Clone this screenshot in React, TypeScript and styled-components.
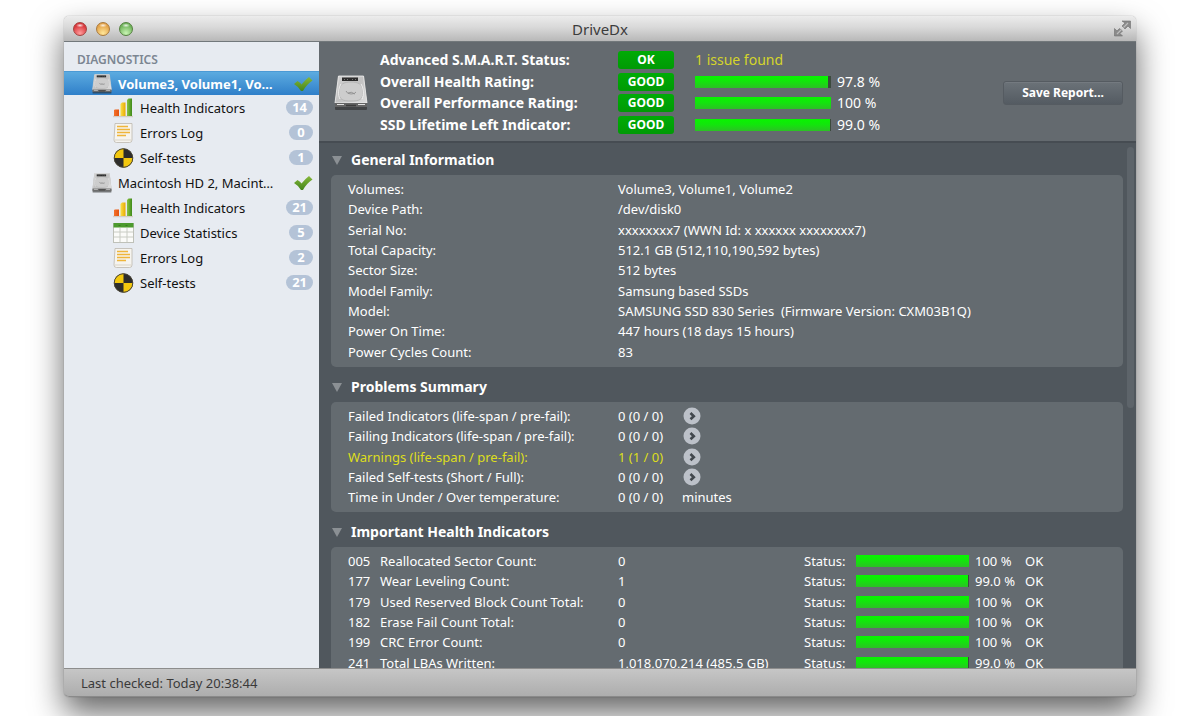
import React from 'react';
import styled, { createGlobalStyle, css } from 'styled-components';

const GlobalStyle = createGlobalStyle`
  * { box-sizing: border-box; }
  body {
    margin: 0;
    background: #fff;
    font-family: "Noto Sans", "Open Sans", sans-serif;
    font-size: 13px;
  }
  button { font: inherit; color: inherit; }
  table { border-collapse: collapse; border-spacing: 0; }
  th { text-align: left; font-weight: inherit; }
  th, td { padding: 0; }
`;

const Desktop = styled.div`
  display: flex;
  height: 100vh;
  padding: 16px 64px 19px;
  overflow: hidden;
`;

const Window = styled.div`
  flex: 1;
  min-width: 0;
  display: flex;
  flex-direction: column;
  border-radius: 5px;
  box-shadow: 0 0 1px rgba(0, 0, 0, 0.5), 0 16px 32px rgba(0, 0, 0, 0.6);
`;

const TitleBar = styled.header`
  display: grid;
  grid-template-columns: 1fr auto 1fr;
  align-items: center;
  height: 26px;
  padding: 0 5px;
  border-radius: 5px 5px 0 0;
  border-bottom: 1px solid #72787b;
  background: linear-gradient(#ececec, #d9d9d9 45%, #b8b8b8);
`;

const Lights = styled.div`
  display: flex;
  gap: 9px;
  padding-left: 4px;
`;

const Light = styled.button<{ $edge: string; $mid: string; $glow: string }>`
  width: 14px;
  height: 14px;
  padding: 0;
  border: 1px solid ${(p) => p.$edge};
  border-radius: 50%;
  background:
    radial-gradient(ellipse 4px 2px at 50% 20%, rgba(255, 255, 255, 0.85), transparent),
    radial-gradient(circle at 50% 85%, ${(p) => p.$glow}, ${(p) => p.$mid} 70%);
`;

const Title = styled.h1`
  margin: 0;
  font-size: 15px;
  line-height: 20px;
  font-weight: 400;
  color: #3c3c3c;
`;

const FullScreenButton = styled.button`
  justify-self: end;
  display: flex;
  padding: 0;
  border: 0;
  background: none;
`;

const Body = styled.div`
  flex: 1;
  min-height: 0;
  display: flex;
`;

const Sidebar = styled.nav`
  width: 255px;
  flex: none;
  padding-top: 8px;
  background: #e7ebf1;
`;

const SidebarHeading = styled.h2`
  margin: 0;
  padding: 0 13px;
  height: 21px;
  font-size: 12px;
  line-height: 20px;
  font-weight: 600;
  color: #7c8692;
`;

const Tree = styled.ul`
  margin: 0;
  padding: 0;
  list-style: none;
`;

const TreeItem = styled.button<{ $child?: boolean; $selected?: boolean }>`
  display: flex;
  align-items: center;
  gap: 6px;
  width: 100%;
  height: 25px;
  padding: 0 6px 0 ${(p) => (p.$child ? 49 : 28)}px;
  border: 0;
  background: none;
  font-size: 13px;
  line-height: 20px;
  color: #111;
  text-align: left;
  ${(p) =>
    p.$selected &&
    css`
      height: 24px;
      background: linear-gradient(#5cabe0, #2f7fc9);
      border-top: 1px solid #4b9ad5;
      color: #fff;
      font-weight: 700;
    `}
`;

const TreeLabel = styled.span`
  flex: 1;
  white-space: nowrap;
`;

const Count = styled.span`
  min-width: 24px;
  height: 15px;
  padding: 0 6px;
  border-radius: 8px;
  background: #b4c3d7;
  color: #fff;
  font-size: 13px;
  line-height: 15px;
  font-weight: 700;
  text-align: center;
`;

const Main = styled.main`
  flex: 1;
  min-width: 0;
  display: flex;
  flex-direction: column;
  color: #fff;
`;

const Overview = styled.section`
  display: flex;
  align-items: center;
  gap: 12px;
  height: 101px;
  padding: 2px 13px 0 15px;
  background: #646a6f;
  border-bottom: 2px solid #464c52;
`;

const RatingTable = styled.table`
  font-size: 14px;
  line-height: 20px;
  tr { height: 21px; }
  tr:nth-child(2n) { height: 22px; }
  th { font-weight: 700; width: 238px; }
  td { white-space: nowrap; }
`;

const Badge = styled.span`
  display: block;
  width: 56px;
  margin-right: 21px;
  border-radius: 3px;
  background: linear-gradient(#00ab06, #009a05);
  font-size: 12px;
  line-height: 18px;
  font-weight: 700;
  text-align: center;
`;

const Issue = styled.span`
  color: #d5d52b;
`;

const Gauge = styled.progress<{ $width: number }>`
  display: block;
  appearance: none;
  width: ${(p) => p.$width}px;
  height: 12px;
  margin-right: 6px;
  border: 0;
  background: #3b4a3d;
  &::-webkit-progress-bar { background: #3b4a3d; }
  &::-webkit-progress-value { background: linear-gradient(#08f400, #12e60c 45%, #2cc125); }
`;

const SaveButton = styled.button`
  width: 120px;
  height: 24px;
  margin-left: auto;
  padding: 0;
  border: 1px solid #555b61;
  border-radius: 3px;
  background: linear-gradient(#6b7278, #545b62);
  box-shadow: inset 0 1px 0 #747a80;
  font-size: 12px;
  line-height: 20px;
  font-weight: 700;
`;

const ScrollArea = styled.div`
  flex: 1;
  min-height: 0;
  display: flex;
  background: #50575d;
`;

const ScrollContent = styled.div`
  flex: 1;
  min-width: 0;
  padding-left: 12px;
  overflow-y: auto;
  scrollbar-width: none;
`;

const ScrollTrack = styled.div`
  width: 13px;
  padding: 4px 2px 0 4px;
`;

const ScrollThumb = styled.div`
  height: 50%;
  border-radius: 4px;
  background: #5d646a;
`;

const SectionToggle = styled.button`
  display: flex;
  align-items: center;
  gap: 9px;
  height: 20px;
  margin: 7px 0 5px;
  padding: 0 1px;
  border: 0;
  background: none;
  font-size: 14px;
  line-height: 20px;
  font-weight: 700;
`;

const Card = styled.div`
  margin-bottom: 10px;
  padding: 4px 17px 5px;
  border-radius: 5px;
  background: #646b70;
`;

const DataTable = styled.table`
  width: 100%;
  table-layout: fixed;
  font-size: 13px;
  line-height: 20px;
  white-space: pre;
  tr { height: 20px; }
  tr:nth-child(3n) { height: 21px; }
`;

const Row = styled.tr<{ $warning?: boolean }>`
  color: ${(p) => (p.$warning ? '#dede1c' : '#fff')};
`;

const GoButton = styled.button`
  display: flex;
  padding: 0 1px;
  border: 0;
  background: none;
`;

const StatusBar = styled.footer`
  height: 29px;
  padding: 0 17px;
  border-top: 1px solid #8d8d8d;
  border-bottom: 1px solid #8a8a8a;
  border-radius: 0 0 5px 5px;
  background: linear-gradient(#c6c6c6, #adadad);
  color: #3a3a3a;
  font-size: 13px;
  line-height: 28px;
`;

function DriveIcon({ width, height }: { width: number; height: number }) {
  return (
    <svg width={width} height={height} viewBox="0 0 34 36" preserveAspectRatio="none" aria-hidden="true">
      <defs>
        <linearGradient id="driveTop" x1="0" y1="0" x2="1" y2="1">
          <stop offset="0" stopColor="#d2d2d2" />
          <stop offset="0.5" stopColor="#c2c2c2" />
          <stop offset="1" stopColor="#dedede" />
        </linearGradient>
      </defs>
      <path d="M1 31h32v3q0 1-1 1H2q-1 0-1-1z" fill="#2b2b2b" opacity="0.6" />
      <path d="M4 1h26l3 26v5H1v-5z" fill="#8d8d8d" />
      <path d="M4.500 1h25l3.500 27H1z" fill="url(#driveTop)" />
      <path d="M4.500 1h25l3.500 27H1z" fill="none" stroke="#f0f0f0" strokeWidth="0.8" />
      <path d="M5 17C5 9 10 7 17 7s12 2 12 10-4 9-12 9S5 25 5 17z" fill="#cdcdcd" stroke="#b0b0b0" strokeWidth="0.8" />
      <path d="M27 9c3 5 3 11 1 15M7 9c-3 5-3 11-1 15" fill="none" stroke="#f4f4f4" strokeWidth="0.9" />
      <path d="M12 16q1 3 5 3t5-2M14 18q3-2 7 1" fill="none" stroke="#8f8f8f" strokeWidth="0.9" />
      <rect x="8" y="2.500" width="16" height="3.500" fill="#2c2c2c" />
      <path d="M10 4.500h1M13 4.500h1M18 4.500h1M21 4.500h1" stroke="#777" strokeWidth="1" />
      <path d="M1 28h32v4H1z" fill="#646464" />
      <path d="M3 29.500h7M24 29.500h7" stroke="#e2e2e2" strokeWidth="1.200" />
      <path d="M12 30.500h10" stroke="#3c3c3c" strokeWidth="1.500" />
    </svg>
  );
}

function ChartIcon() {
  return (
    <svg width="21" height="20" viewBox="0 0 21 20" aria-hidden="true">
      <defs>
        <linearGradient id="barRed" x1="0" x2="1"><stop offset="0" stopColor="#f4702a" /><stop offset="1" stopColor="#e2520f" /></linearGradient>
        <linearGradient id="barYellow" x1="0" x2="1"><stop offset="0" stopColor="#fbe04a" /><stop offset="1" stopColor="#e9a800" /></linearGradient>
        <linearGradient id="barGreen" x1="0" x2="1"><stop offset="0" stopColor="#8ac43f" /><stop offset="1" stopColor="#3f8a1b" /></linearGradient>
      </defs>
      <path d="M0 18.500h20" stroke="#d3cdc4" strokeWidth="1.500" />
      <path d="M1 12l1-.500h4V18H1z" fill="url(#barRed)" />
      <path d="M7.500 6L9 4.500h3.500V18h-5z" fill="url(#barYellow)" />
      <path d="M14 2L15.500.500H19V18h-5z" fill="url(#barGreen)" />
    </svg>
  );
}

function LogIcon() {
  return (
    <svg width="21" height="20" viewBox="0 0 21 20" aria-hidden="true">
      <path d="M2 .500h17V17q0 2.500-2.500 2.500h-13Q1 19.500 1 17z" fill="#f6f4ef" stroke="#bdb8ae" strokeWidth="0.8" />
      <path d="M4 3.500h11M4 6.500h13M4 9.500h13M4 12.500h9" stroke="#efb53a" strokeWidth="1.500" />
      <path d="M1.500 17h17" stroke="#d9d4c8" strokeWidth="1" />
    </svg>
  );
}

function TestIcon() {
  return (
    <svg width="21" height="20" viewBox="0 0 21 20" aria-hidden="true">
      <circle cx="10.500" cy="10" r="9.500" fill="#2d2d2b" />
      <path d="M10.500 .500A9.500 9.500 0 0 0 1 10h9.500z" fill="#f3c80f" />
      <path d="M10.500 19.500A9.500 9.500 0 0 0 20 10h-9.500z" fill="#f3c80f" />
      <circle cx="10.500" cy="10" r="9.300" fill="none" stroke="#4a4536" strokeWidth="1" />
    </svg>
  );
}

function TableIcon() {
  return (
    <svg width="21" height="20" viewBox="0 0 21 20" aria-hidden="true">
      <rect x="0.500" y="0.500" width="20" height="19" fill="#fbfbf9" stroke="#bfc1b9" />
      <rect x="0.500" y="0" width="20" height="4.500" fill="#4c9a2e" />
      <path d="M5.500 2.500h2M12.500 2.500h2" stroke="#3a7b20" />
      <path d="M1 9h19M1 14h19M7 5v14M14 5v14" stroke="#c9ccc4" strokeWidth="1" />
    </svg>
  );
}

function CheckIcon() {
  return (
    <svg width="20" height="16" viewBox="0 0 20 16" aria-label="Healthy" role="img">
      <defs>
        <linearGradient id="check" x1="0" y1="0" x2="0" y2="1"><stop offset="0" stopColor="#86b83a" /><stop offset="1" stopColor="#43851c" /></linearGradient>
      </defs>
      <path d="M1 8L4.500 5q3 1.500 4 3.500Q12 4 16 1L19.500 4.500Q13 9 10 15H8Q6 11 1 8z" fill="url(#check)" />
    </svg>
  );
}

function FullScreenIcon() {
  return (
    <svg width="17" height="17" viewBox="0 0 17 17" aria-hidden="true">
      <g fill="#8a8a8a" stroke="#6f6f6f" strokeWidth="0.6">
        <path d="M8 1h8.500v7.500L14 6l-3 3-3-3 3-3z" />
        <path d="M.500 8.500L3 11l2.500-2.500 3 2.500L6 13.500 8.500 16H.500z" />
      </g>
      <path d="M9.500 7.500L14 3M3 14l4.500-4.500" stroke="#bdbdbd" strokeWidth="1.200" />
    </svg>
  );
}

function GoIcon() {
  return (
    <svg width="18" height="18" viewBox="0 0 18 18" aria-hidden="true">
      <circle cx="9" cy="9" r="8.500" fill="#bcc1c9" />
      <path d="M7.500 6L10.800 9.200 7.500 12.300" fill="none" stroke="#42484e" strokeWidth="2.600" />
    </svg>
  );
}

function Disclosure() {
  return (
    <svg width="10" height="9" viewBox="0 0 10 9" aria-hidden="true">
      <path d="M0 0h10L5 9z" fill="#8b9094" />
    </svg>
  );
}

type Child = [icon: React.ComponentType, label: string, count: number];

const drives: { name: string; selected?: boolean; children: Child[] }[] = [
  {
    name: 'Volume3, Volume1, Vo…',
    selected: true,
    children: [
      [ChartIcon, 'Health Indicators', 14],
      [LogIcon, 'Errors Log', 0],
      [TestIcon, 'Self-tests', 1],
    ],
  },
  {
    name: 'Macintosh HD 2, Macint…',
    children: [
      [ChartIcon, 'Health Indicators', 21],
      [TableIcon, 'Device Statistics', 5],
      [LogIcon, 'Errors Log', 2],
      [TestIcon, 'Self-tests', 21],
    ],
  },
];

const ratings: [label: string, value: number, text: string][] = [
  ['Overall Health Rating:', 97.8, '97.8 %'],
  ['Overall Performance Rating:', 100, '100 %'],
  ['SSD Lifetime Left Indicator:', 99, '99.0 %'],
];

const general: [string, string][] = [
  ['Volumes:', 'Volume3, Volume1, Volume2'],
  ['Device Path:', '/dev/disk0'],
  ['Serial No:', 'xxxxxxxx7 (WWN Id: x xxxxxx xxxxxxxx7)'],
  ['Total Capacity:', '512.1 GB (512,110,190,592 bytes)'],
  ['Sector Size:', '512 bytes'],
  ['Model Family:', 'Samsung based SSDs'],
  ['Model:', 'SAMSUNG SSD 830 Series  (Firmware Version: CXM03B1Q)'],
  ['Power On Time:', '447 hours (18 days 15 hours)'],
  ['Power Cycles Count:', '83'],
];

const problems: { label: string; value: string; unit?: string; warning?: boolean }[] = [
  { label: 'Failed Indicators (life-span / pre-fail):', value: '0 (0 / 0)' },
  { label: 'Failing Indicators (life-span / pre-fail):', value: '0 (0 / 0)' },
  { label: 'Warnings (life-span / pre-fail):', value: '1 (1 / 0)', warning: true },
  { label: 'Failed Self-tests (Short / Full):', value: '0 (0 / 0)' },
  { label: 'Time in Under / Over temperature:', value: '0 (0 / 0)', unit: 'minutes' },
];

const indicators: [id: string, name: string, raw: string, value: number, text: string][] = [
  ['005', 'Reallocated Sector Count:', '0', 100, '100 %'],
  ['177', 'Wear Leveling Count:', '1', 99, '99.0 %'],
  ['179', 'Used Reserved Block Count Total:', '0', 100, '100 %'],
  ['182', 'Erase Fail Count Total:', '0', 100, '100 %'],
  ['199', 'CRC Error Count:', '0', 100, '100 %'],
  ['241', 'Total LBAs Written:', '1,018,070,214 (485.5 GB)', 99, '99.0 %'],
];

function Columns({ widths }: { widths: number[] }) {
  return (
    <colgroup>
      {widths.map((w, i) => (
        <col key={i} width={w} />
      ))}
      <col />
    </colgroup>
  );
}

function Section({ title, children }: { title: string; children: React.ReactNode }) {
  return (
    <section>
      <SectionToggle aria-expanded="true">
        <Disclosure />
        {title}
      </SectionToggle>
      <Card>{children}</Card>
    </section>
  );
}

export default function App() {
  return (
    <>
      <GlobalStyle />
      <Desktop>
        <Window>
          <TitleBar>
            <Lights>
              <Light aria-label="Close" $edge="#a3433f" $mid="#d9353a" $glow="#ff9c9c" />
              <Light aria-label="Minimize" $edge="#a9793c" $mid="#e3a248" $glow="#ffe79a" />
              <Light aria-label="Zoom" $edge="#54803f" $mid="#6fb35a" $glow="#c9f5b4" />
            </Lights>
            <Title>DriveDx</Title>
            <FullScreenButton aria-label="Enter full screen">
              <FullScreenIcon />
            </FullScreenButton>
          </TitleBar>
          <Body>
            <Sidebar>
              <SidebarHeading>DIAGNOSTICS</SidebarHeading>
              <Tree>
                {drives.map((drive) => (
                  <li key={drive.name}>
                    <TreeItem $selected={drive.selected}>
                      <DriveIcon width={20} height={20} />
                      <TreeLabel>{drive.name}</TreeLabel>
                      <CheckIcon />
                    </TreeItem>
                    <Tree>
                      {drive.children.map(([Icon, label, count]) => (
                        <li key={label}>
                          <TreeItem $child>
                            <Icon />
                            <TreeLabel>{label}</TreeLabel>
                            <Count>{count}</Count>
                          </TreeItem>
                        </li>
                      ))}
                    </Tree>
                  </li>
                ))}
              </Tree>
            </Sidebar>
            <Main>
              <Overview>
                <DriveIcon width={34} height={36} />
                <RatingTable>
                  <tbody>
                    <tr>
                      <th scope="row">Advanced S.M.A.R.T. Status:</th>
                      <td><Badge>OK</Badge></td>
                      <td colSpan={2}><Issue>1 issue found</Issue></td>
                    </tr>
                    {ratings.map(([label, value, text]) => (
                      <tr key={label}>
                        <th scope="row">{label}</th>
                        <td><Badge>GOOD</Badge></td>
                        <td><Gauge $width={136} max={100} value={value} aria-label={label} /></td>
                        <td>{text}</td>
                      </tr>
                    ))}
                  </tbody>
                </RatingTable>
                <SaveButton>Save Report...</SaveButton>
              </Overview>
              <ScrollArea>
                <ScrollContent>
                  <Section title="General Information">
                    <DataTable>
                      <Columns widths={[270]} />
                      <tbody>
                        {general.map(([label, value]) => (
                          <Row key={label}>
                            <th scope="row">{label}</th>
                            <td>{value}</td>
                          </Row>
                        ))}
                      </tbody>
                    </DataTable>
                  </Section>
                  <Section title="Problems Summary">
                    <DataTable>
                      <Columns widths={[270, 64]} />
                      <tbody>
                        {problems.map((p) => (
                          <Row key={p.label} $warning={p.warning}>
                            <th scope="row">{p.label}</th>
                            <td>{p.value}</td>
                            <td>
                              {p.unit ?? (
                                <GoButton aria-label="Show details">
                                  <GoIcon />
                                </GoButton>
                              )}
                            </td>
                          </Row>
                        ))}
                      </tbody>
                    </DataTable>
                  </Section>
                  <Section title="Important Health Indicators">
                    <DataTable>
                      <Columns widths={[32, 238, 186, 52, 119, 50]} />
                      <tbody>
                        {indicators.map(([id, name, raw, value, text]) => (
                          <Row key={id}>
                            <td>{id}</td>
                            <th scope="row">{name}</th>
                            <td>{raw}</td>
                            <td>Status:</td>
                            <td><Gauge $width={113} max={100} value={value} aria-label={name} /></td>
                            <td>{text}</td>
                            <td>OK</td>
                          </Row>
                        ))}
                      </tbody>
                    </DataTable>
                  </Section>
                </ScrollContent>
                <ScrollTrack>
                  <ScrollThumb />
                </ScrollTrack>
              </ScrollArea>
            </Main>
          </Body>
          <StatusBar>Last checked: Today 20:38:44</StatusBar>
        </Window>
      </Desktop>
    </>
  );
}
